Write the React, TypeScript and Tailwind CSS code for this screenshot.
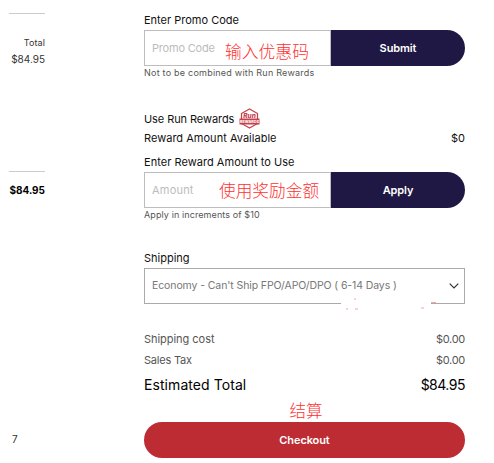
import { useState } from 'react';

interface CodeFieldProps {
    label: string;
    labelClass: string;
    placeholder: string;
    placeholderClass: string;
    note: string;
    noteClass: string;
    hint: string;
    hintClass: string;
    action: string;
}

interface RowProps {
    label: string;
    value: string;
    className: string;
    labelClass: string;
    valueClass: string;
}

const RewardsBadge = () => (
    <svg viewBox="0 0 42 42" className="w-[21px] h-[21px] overflow-visible" fill="none">
        <path d="M21 2 L37 11 V31 L21 40 L5 31 V11 Z" stroke="#c5404a" strokeWidth="2.5" strokeLinejoin="round" />
        <path d="M1 21 H41 V33 H1 Z" fill="#c5404a" />
        <text x="21" y="20" textAnchor="middle" fontSize="13" fontWeight="800" fontStyle="italic" fill="#c5404a">Run</text>
        <text x="21" y="30.5" textAnchor="middle" fontSize="7.5" fontWeight="800" fill="#fff">REWARDS</text>
    </svg>
);

const CodeField = ({ label, labelClass, placeholder, placeholderClass, note, noteClass, hint, hintClass, action }: CodeFieldProps) => {
    const [value, setValue] = useState('');

    return (
        <div>
            <div className="h-5 text-[11px] leading-5 text-[#111]">
                <span className={labelClass}>{label}</span>
            </div>
            <div className="flex h-9">
                <div className="relative w-[187px]">
                    <input
                        value={value}
                        onChange={(e) => setValue(e.target.value)}
                        placeholder={placeholder}
                        className={`w-full h-full border border-[#bdbdbd] pl-[7px] text-[11px] outline-none placeholder:text-[#bcbcbc] ${placeholderClass}`}
                    />
                    <span className={`absolute font-['Noto_Sans_CJK_SC',sans-serif] font-light leading-5 whitespace-nowrap text-[#ff3030] pointer-events-none ${hintClass}`}>
                        {hint}
                    </span>
                </div>
                <button className="flex-1 rounded-r-full bg-[#1f1844] text-[11px] font-semibold tracking-[-0.1px] text-white">{action}</button>
            </div>
            <div className="h-3.5 text-[9px] leading-[14px] text-[#555]">
                <span className={noteClass}>{note}</span>
            </div>
        </div>
    );
};

const Row = ({ label, value, className, labelClass, valueClass }: RowProps) => (
    <div className={`flex justify-between ${className}`}>
        <span className={labelClass}>{label}</span>
        <span className={valueClass}>{value}</span>
    </div>
);

const App = () => {
    return (
        <div className="flex w-[494px] h-[463px] overflow-hidden bg-white font-['Inter','Noto_Sans_CJK_SC',sans-serif]">
            {/* Cart totals column */}
            <aside className="w-9 ml-[9px] mr-[99px] pt-[13px] text-right">
                <div className="h-[158px] border-t border-[#ccc] pt-[22px] text-[#333]">
                    <p className="text-[9px] leading-[14px] tracking-[0.1px]">Total</p>
                    <p className="mt-[1px] text-[10px] leading-[16px]">$84.95</p>
                </div>
                <div className="border-t border-[#ccc] pt-[10px]">
                    <p className="text-[10px] leading-4 font-bold text-black">$84.95</p>
                </div>
                <p className="mt-[233px] pl-[3px] text-left text-[10px] leading-4 text-[#333]">7</p>
            </aside>

            <main className="w-[321px] pt-[10px]">
                <CodeField
                    label="Enter Promo Code"
                    labelClass="tracking-normal"
                    placeholder="Promo Code"
                    placeholderClass="tracking-[-0.2px]"
                    note="Not to be combined with Run Rewards"
                    noteClass="tracking-[0.23px]"
                    hint="输入优惠码"
                    hintClass="left-[81px] top-[11px] text-[16.8px]"
                    action="Submit"
                />

                <div className="mt-[28px] flex h-[21px] items-center gap-[5px] text-[11px] text-[#111]">
                    <span className="pt-[1px] tracking-[-0.08px]">Use Run Rewards</span>
                    <RewardsBadge />
                </div>
                <Row
                    label="Reward Amount Available"
                    value="$0"
                    className="h-[18px] text-[11px] leading-[18px] text-[#111]"
                    labelClass="tracking-[0.02px]"
                    valueClass=""
                />
                <div className="pt-[5px]">
                    <CodeField
                        label="Enter Reward Amount to Use"
                        labelClass="tracking-[0.04px]"
                        placeholder="Amount"
                        placeholderClass="tracking-[0.2px]"
                        note="Apply in increments of $10"
                        noteClass="tracking-[0.1px]"
                        hint="使用奖励金额"
                        hintClass="left-[75px] top-[8px] text-[16.7px]"
                        action="Apply"
                    />
                </div>

                {/* Shipping method */}
                <div className="mt-[26px] h-5 text-[11px] leading-5 text-[#111]">Shipping</div>
                <div className="relative flex h-9 items-center justify-between border border-[#aaa] pl-[7px] pr-[5px] text-[10.5px] text-[#777]">
                    <span className="tracking-[-0.1px]">Economy - Can't Ship FPO/APO/DPO ( 6-14 Days )</span>
                    <svg viewBox="0 0 10 6" className="w-[10px] h-[6px]" fill="none">
                        <path d="M0.7 0.7 L5 5 L9.3 0.7" stroke="#333" strokeWidth="1.2" />
                    </svg>
                    {/* White smudge over the bottom border */}
                    <svg viewBox="0 0 96 12" className="absolute left-[196px] top-[29px] w-24 h-3">
                        <path d="M0 3 H90 V9 H0 Z" fill="#fff" />
                        <path d="M13 1 h2 M90 4.5 h5 M5 11 h2 M14 11 h3 M80 10 h3" stroke="#ffa0a0" strokeWidth="1" />
                    </svg>
                </div>

                <Row
                    label="Shipping cost"
                    value="$0.00"
                    className="mt-[25px] h-[21px] text-[11px] leading-[21px] text-[#555]"
                    labelClass="tracking-[-0.04px]"
                    valueClass="tracking-[-0.3px]"
                />
                <Row
                    label="Sales Tax"
                    value="$0.00"
                    className="h-[21px] text-[11px] leading-[21px] text-[#555]"
                    labelClass="tracking-[-0.2px]"
                    valueClass="tracking-[-0.3px]"
                />
                <Row
                    label="Estimated Total"
                    value="$84.95"
                    className="h-7 text-[14px] leading-7 text-black"
                    labelClass="tracking-[0.07px]"
                    valueClass="tracking-[-0.5px]"
                />
                <p className="h-[23px] pt-[1px] pl-[3px] text-center font-['Noto_Sans_CJK_SC',sans-serif] font-light text-[16.5px] leading-5 text-[#ff3030]">结算</p>
                <button className="block w-full h-9 rounded-full bg-[#be2c33] text-[11px] font-semibold tracking-[-0.1px] text-white">Checkout</button>
            </main>
        </div>
    );
};

export default App;
